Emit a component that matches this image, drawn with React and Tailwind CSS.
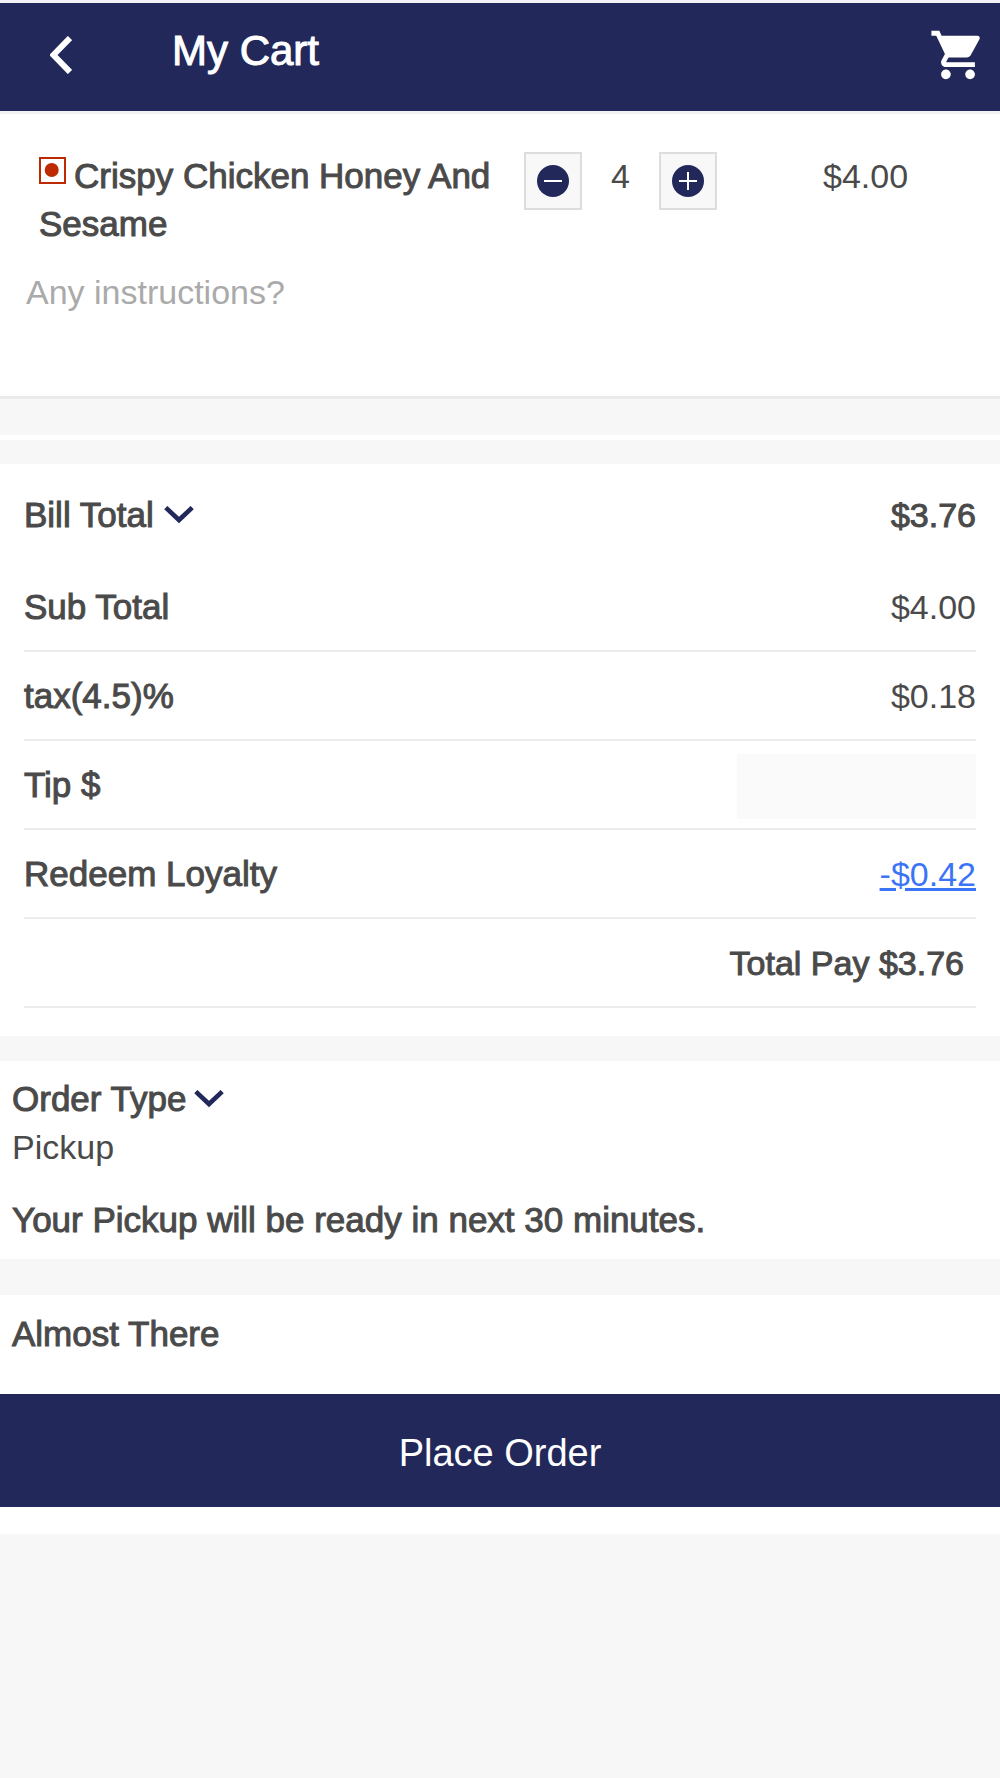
// App.jsx
// Cart page: item list, bill breakdown, order type and the place order button.

import { useState }       from 'react'
import { MdShoppingCart } from 'react-icons/md'

const BILL_ROWS = [
  { label: 'Sub Total',  value: '$4.00' },
  { label: 'tax(4.5)%',  value: '$0.18' },
]

// One step heavier than regular, lighter than bold
const MEDIUM = '[-webkit-text-stroke:1px_currentColor]'
const LABEL  = `text-[35px] ${MEDIUM}`

const ROW = 'flex items-center justify-between h-[89px] border-b-2 border-[#ececec]'

function ChevronDown() {
  return (
    <svg width="30" height="18" viewBox="0 0 30 18" fill="none" aria-hidden="true">
      <path d="M1.8 1.6 15 14 28.2 1.6" stroke="#22295a" strokeWidth="4.6" />
    </svg>
  )
}

function StepButton({ label, plus, onClick }) {
  return (
    <button
      onClick={onClick}
      aria-label={label}
      className="w-[58px] h-[58px] flex items-center justify-center bg-[#f8f8f8] border-2 border-[#dddddd]"
    >
      <svg width="32" height="32" viewBox="0 0 32 32" aria-hidden="true">
        <circle cx="16" cy="16" r="16" fill="#22295a" />
        <path d={plus ? 'M7 16h18M16 7v18' : 'M7 16h18'} stroke="#ffffff" strokeWidth="2" />
      </svg>
    </button>
  )
}

function Header() {
  return (
    <header className="flex items-center justify-between h-[114px] pl-[50px] pr-[13px] pb-1 bg-[#22295a] border-t-3 border-b-3 border-[#f3f1f4] text-white">
      <div className="flex items-center">
        <button aria-label="Back" className="w-[122px]">
          <svg width="22" height="38" viewBox="0 0 22 38" fill="none" aria-hidden="true">
            <path d="M20 2 3.4 19 20 36" stroke="#ffffff" strokeWidth="6" />
          </svg>
        </button>
        <h1 className={`text-[42px] leading-[48px] pb-2 ${MEDIUM}`}>My Cart</h1>
      </div>
      <button aria-label="Cart">
        <MdShoppingCart size={58} />
      </button>
    </header>
  )
}

function CartItem() {
  const [qty, setQty] = useState(4)

  return (
    <section className="bg-white border-b-3 border-[#ebebeb] pt-[38px]">
      <div className="flex items-start pl-[39px]">
        <h2 className={`flex-1 pr-4 ${LABEL}`}>
          {/* Non-veg mark */}
          <svg className="inline mr-2 mb-4" width="27" height="27" viewBox="0 0 27 27" aria-hidden="true">
            <rect x="1" y="1" width="25" height="25" fill="none" stroke="#bd2a00" strokeWidth="2" />
            <circle cx="12.7" cy="13" r="7" fill="#bd2a00" />
          </svg>
          Crispy Chicken Honey And Sesame
        </h2>
        <div className="flex items-start justify-between w-[193px]">
          <StepButton label="Remove one" onClick={() => setQty(Math.max(0, qty - 1))} />
          <span>{qty}</span>
          <StepButton label="Add one" plus onClick={() => setQty(qty + 1)} />
        </div>
        <span className="w-[283px] pl-[106px]">$4.00</span>
      </div>
      <textarea
        aria-label="Instructions"
        placeholder="Any instructions?"
        className="block w-full h-32 mt-5 px-[26px] resize-none outline-none placeholder:text-[#aaaaaa]"
      />
    </section>
  )
}

function Bill() {
  return (
    <section className="bg-white px-6 pt-[27px] pb-7">
      <div className="flex items-center justify-between mb-6">
        <button className={`flex items-center gap-[10px] ${LABEL}`}>
          Bill Total <ChevronDown />
        </button>
        <span className={MEDIUM}>$3.76</span>
      </div>

      {BILL_ROWS.map(row => (
        <div key={row.label} className={ROW}>
          <span className={LABEL}>{row.label}</span>
          <span>{row.value}</span>
        </div>
      ))}

      <div className={ROW}>
        <label htmlFor="tip" className={LABEL}>Tip $</label>
        <input id="tip" type="text" inputMode="decimal" className="w-[239px] h-[65px] mt-1 px-3 bg-[#fafafa] text-right outline-none" />
      </div>

      <div className={ROW}>
        <span className={LABEL}>Redeem Loyalty</span>
        <a href="#loyalty" className="text-[#3b74f6] underline">-$0.42</a>
      </div>

      <div className={ROW}>
        <span className={`ml-auto pr-3 ${MEDIUM}`}>Total Pay $3.76</span>
      </div>
    </section>
  )
}

export default function App() {
  return (
    <div className="min-h-screen bg-[#f7f7f7] text-[#4a4a4a] text-[34px] leading-[48px] font-['Liberation_Sans',Arial,sans-serif]">
      <Header />

      <main>
        <CartItem />
        <div className="h-[5px] mt-9 mb-6 bg-white" />
        <Bill />

        {/* Order type */}
        <section className="mt-[25px] px-3 pt-[14px] pb-[15px] bg-white">
          <button className={`flex items-center gap-2 ${LABEL}`}>
            Order Type <ChevronDown />
          </button>
          <p>Pickup</p>
          <p className={`mt-[25px] ${LABEL}`}>Your Pickup will be ready in next 30 minutes.</p>
        </section>

        {/* Checkout */}
        <section className="mt-9 pt-[15px] pb-[27px] bg-white">
          <h2 className={`px-3 mb-9 ${LABEL}`}>Almost There</h2>
          <button className="block w-full h-[113px] pt-1 bg-[#22295a] text-white text-[38px]">
            Place Order
          </button>
        </section>
      </main>
    </div>
  )
}
